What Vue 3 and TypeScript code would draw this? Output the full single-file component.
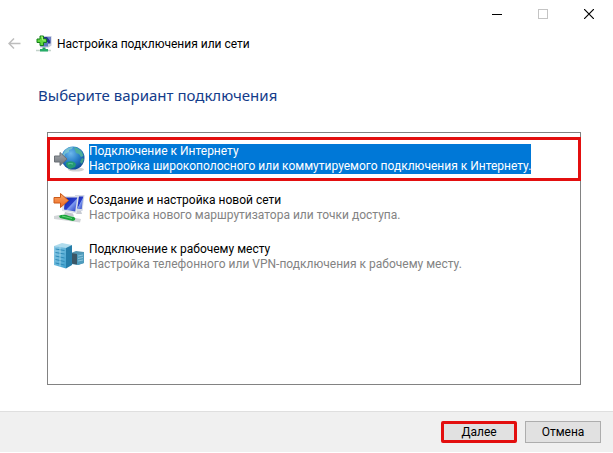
<script setup lang="ts">
import { ref } from 'vue'

interface ConnectionOption {
  id: string
  title: string
  description: string
}

const options: ConnectionOption[] = [
  {
    id: 'internet',
    title: 'Подключение к Интернету',
    description: 'Настройка широкополосного или коммутируемого подключения к Интернету.',
  },
  {
    id: 'network',
    title: 'Создание и настройка новой сети',
    description: 'Настройка нового маршрутизатора или точки доступа.',
  },
  {
    id: 'workplace',
    title: 'Подключение к рабочему месту',
    description: 'Настройка телефонного или VPN-подключения к рабочему месту.',
  },
]

const selected = ref('internet')
</script>

<template>
  <div class="window">
    <div class="caption">
      <button type="button" class="caption-button" aria-label="Свернуть">
        <svg width="10" height="10" viewBox="0 0 10 10"><path d="M0 5.5h10" stroke="#000" /></svg>
      </button>
      <button type="button" class="caption-button" aria-label="Развернуть" disabled>
        <svg width="10" height="10" viewBox="0 0 10 10"><rect x=".5" y=".5" width="9" height="9" fill="none" stroke="#c4c4c4" /></svg>
      </button>
      <button type="button" class="caption-button" aria-label="Закрыть">
        <svg width="10" height="10" viewBox="0 0 10 10"><path d="M0 0l10 10M10 0L0 10" stroke="#000" stroke-width="1.2" /></svg>
      </button>
    </div>

    <header class="header">
      <button type="button" class="back" aria-label="Назад" disabled>
        <svg width="13" height="12" viewBox="0 0 13 12"><path d="M12.500 5.500H1.500M6 .5l-5 5 5 5" fill="none" stroke="#bdbdbd" stroke-width="1.500" /></svg>
      </button>
      <svg class="app-icon" width="16" height="18" viewBox="0 0 16 18" aria-hidden="true">
        <path d="M6 1h9.500v9.500l-3 2H4V3z" fill="#c3cbdd" />
        <path d="M7 2h7.500v6.500H7z" fill="#24358e" />
        <path d="M11 2h3.500v4.500z" fill="#6c80cc" />
        <path d="M4.500 7H12v4.500H4.500z" fill="#5e78c0" />
        <path d="M6.500 12.500h3V15h-3z" fill="#1f9a5a" />
        <path d="M0 15.500h15" stroke="#c3d3cb" stroke-width="1.500" />
        <path d="M4 14h8v2.500H4z" fill="#27ad68" />
        <path d="M4 1h3.500v3h3v3.500h-3v3H4v-3H1V4h3z" fill="#62d83e" stroke="#15801c" />
        <path d="M5 2h1.500v3h3" fill="none" stroke="#a8f27e" />
      </svg>
      <span class="title">Настройка подключения или сети</span>
    </header>

    <main class="content">
      <h1 class="heading">Выберите вариант подключения</h1>
      <ul class="options">
        <li v-for="option in options" :key="option.id">
          <button
            type="button"
            class="option"
            :class="{ selected: selected === option.id }"
            :aria-pressed="selected === option.id"
            @click="selected = option.id"
          >
            <svg v-if="option.id === 'internet'" width="32" height="32" viewBox="0 0 32 32" aria-hidden="true">
              <defs>
                <radialGradient id="sea" cx=".4" cy=".3" r=".75">
                  <stop offset="0" stop-color="#6db8ec" />
                  <stop offset=".5" stop-color="#2a7fc9" />
                  <stop offset="1" stop-color="#0d4590" />
                </radialGradient>
                <linearGradient id="grey-arrow" x2="0" y2="1">
                  <stop offset="0" stop-color="#a5a9ae" />
                  <stop offset="1" stop-color="#6d7278" />
                </linearGradient>
              </defs>
              <ellipse cx="23" cy="26.500" rx="8" ry="2" fill="#cfd1d3" />
              <circle cx="20" cy="15" r="11.500" fill="url(#sea)" />
              <path d="M11 9q3-5 9-5l-1 2-3 1v2l-4 2-1 4-2-2z" fill="#7fc9cf" opacity=".8" />
              <path d="M21 4q5 1 8 5l1.500 4-2.500 1-2-3-3-1-1-3z" fill="#4cae9c" />
              <path d="M29 15l2 1-2 5-2-2z" fill="#3f9f8a" />
              <path d="M13 20q3-3 8-1l2 2-1 3-5 2q-4-2-4-6z" fill="#249a72" />
              <path d="M15 21q2-1 5 0" fill="none" stroke="#63c79e" />
              <path d="M1.500 13H7V9.500l7 6.500-7 6.500V19H1.500z" fill="url(#grey-arrow)" stroke="#6b7076" />
            </svg>
            <svg v-else-if="option.id === 'network'" width="32" height="32" viewBox="0 0 32 32" aria-hidden="true">
              <defs>
                <linearGradient id="screen" x2="1" y2="1">
                  <stop offset="0" stop-color="#0d21a8" />
                  <stop offset=".5" stop-color="#2a3fca" />
                  <stop offset=".55" stop-color="#7f9cf0" />
                  <stop offset="1" stop-color="#2035bd" />
                </linearGradient>
                <linearGradient id="orange-arrow" x2="0" y2="1">
                  <stop offset="0" stop-color="#fba566" />
                  <stop offset="1" stop-color="#ed6a20" />
                </linearGradient>
              </defs>
              <path d="M22 3h9.500l-2 16h-7z" fill="#d3d8e4" />
              <path d="M24 4.500h6.300l-1.600 12.500h-5z" fill="url(#screen)" />
              <path d="M24 19h4l1 3h-6z" fill="#c6cad2" />
              <path d="M10 4h16l-2.500 17.500L9 19z" fill="#dde1ea" />
              <path d="M12 5.500h12.300l-2.100 14-11.200-2z" fill="url(#screen)" />
              <path d="M12 20l8 1.500 1 3-10-1z" fill="#c2c6ce" />
              <path d="M1 24l5-1 22 4-1 3.500L1 27z" fill="#d3d6d9" />
              <path d="M8 23q4-1 8 1l5 1q2 1 1 3l-2 1-13-3-1-2z" fill="#1ba33c" />
              <path d="M9 24l10 2.500" stroke="#65d47a" />
              <path d="M1 5.500h6.500V1.500l8 7-8 7v-4.500H1z" fill="url(#orange-arrow)" stroke="#cc5a18" />
            </svg>
            <svg v-else width="32" height="32" viewBox="0 0 32 32" aria-hidden="true">
              <defs>
                <linearGradient id="cabinet" x2="1" y2="1">
                  <stop offset="0" stop-color="#8fcbe6" />
                  <stop offset="1" stop-color="#3d9fcd" />
                </linearGradient>
              </defs>
              <path d="M18 12l5-2 8 1v11l-6 2-7-1z" fill="#5495b1" />
              <path d="M18 12l6 1v10.500l-6-1z" fill="#3b5767" />
              <path d="M24 13l7-1.500v10.500l-6 2h-1z" fill="#4f9cbd" />
              <path d="M25 15l5-1M25 17.500l5-1M25 20l5-1" stroke="#8cc5db" />
              <path d="M1 5l8-3 10 2-6 4z" fill="#b0dced" />
              <path d="M1 5l12 2v20.500L1 24z" fill="url(#cabinet)" />
              <path d="M13 7l6-3v20l-6 3.500z" fill="#257da9" />
              <path d="M2.500 8l9 1.500M2.500 11.500l9 1.500M2.500 15l9 2M2.500 18.500l9 2M2.500 22l9 2" stroke="#2d8bb9" />
              <path d="M7 6v19.500" stroke="#b4e0f0" opacity=".7" />
            </svg>
            <span class="option-text">
              <span class="option-title">{{ option.title }}</span>
              <span class="option-description">{{ option.description }}</span>
            </span>
          </button>
        </li>
      </ul>
    </main>

    <footer class="footer">
      <button type="button" class="action primary">Далее</button>
      <button type="button" class="action">Отмена</button>
    </footer>
  </div>
</template>

<style>
body {
  margin: 0;
  background: #fff;
}
</style>

<style scoped>
.window {
  box-sizing: border-box;
  display: flex;
  flex-direction: column;
  min-height: 100vh;
  padding-bottom: 1px;
  background: #fff;
  color: #000;
  font: 12px/15px Roboto, "Noto Sans", sans-serif;
}

button {
  margin: 0;
  padding: 0;
  border: 0;
  background: none;
  color: inherit;
  font: inherit;
}

svg {
  display: block;
  flex: none;
}

.caption {
  display: flex;
  justify-content: flex-end;
  height: 28px;
  padding-right: 1px;
}

.caption-button {
  display: flex;
  align-items: center;
  justify-content: center;
  width: 46px;
}

.header {
  display: flex;
  align-items: center;
  height: 32px;
  padding-left: 8px;
}

.app-icon {
  margin: 0 5px 0 15px;
}

.content {
  display: flex;
  flex: 1;
  flex-direction: column;
  padding: 24px 32px 26px 38px;
}

.heading {
  margin: 0;
  color: #133c8b;
  font-family: "Noto Sans", sans-serif;
  font-size: 15px;
  font-weight: 400;
  line-height: 22px;
}

.options {
  display: flex;
  flex: 1;
  flex-direction: column;
  gap: 5px;
  margin: 26px 0 0 9px;
  padding: 4px 0;
  border: 1px solid #828282;
  list-style: none;
}

.options li {
  margin: 0 -1px;
}

.option {
  box-sizing: border-box;
  display: flex;
  align-items: center;
  gap: 4px;
  width: 100%;
  height: 44px;
  padding: 0 3px;
  border: 3px solid transparent;
  text-align: left;
  white-space: nowrap;
}

.option.selected {
  border-color: #e30f0f;
}

.option-text,
.option-title,
.option-description {
  display: block;
}

.option-description {
  color: #838383;
}

.selected .option-text {
  background: #0078d7;
  color: #fff;
}

.selected .option-description {
  color: inherit;
}

.footer {
  display: flex;
  justify-content: flex-end;
  gap: 8px;
  padding: 9px 12px;
  border-top: 1px solid #dfdfdf;
  background: #f0f0f0;
}

.action {
  box-sizing: border-box;
  width: 76px;
  height: 22px;
  border: 1px solid #adadad;
  background: #e1e1e1;
}

.action.primary {
  border: 3px solid #e30f0f;
  border-radius: 2px;
}
</style>
